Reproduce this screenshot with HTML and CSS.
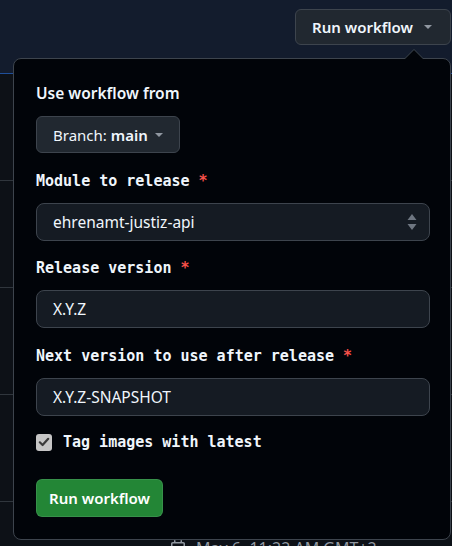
FILE: index.html
```html
<!DOCTYPE html>
<html lang="en">
<head>
<meta charset="utf-8">
<title>Run workflow</title>
<link rel="stylesheet" href="styles.css">
</head>
<body>
<div class="page">
  <header class="banner">
    <button class="btn btn-top" type="button">Run workflow <span class="caret"></span></button>
  </header>
  <ul class="runs">
    <li class="run"></li>
    <li class="run"></li>
    <li class="run"></li>
    <li class="run"></li>
    <li class="run run-last">
      <span class="meta">
        <svg class="cal" width="16" height="16" viewBox="0 0 16 16" aria-hidden="true"><path fill="currentColor" d="M4.75 0a.75.75 0 0 1 .75.75V2h5V.75a.75.75 0 0 1 1.5 0V2h1.25c.966 0 1.75.784 1.750 1.75v10.5A1.75 1.75 0 0 1 13.25 16H2.75A1.75 1.75 0 0 1 1 14.25V3.75C1 2.784 1.784 2 2.75 2H4V.75A.75.75 0 0 1 4.75 0ZM2.5 7.5v6.75c0 .138.112.25.25.25h10.5a.25.25 0 0 0 .25-.25V7.5Zm10.75-4H2.75a.25.25 0 0 0-.25.25V6h11V3.75a.25.25 0 0 0-.25-.25Z"/></svg>
        May 6, 11:22 AM GMT+2
      </span>
    </li>
  </ul>

  <div class="dropdown">
    <span class="arrow"></span>
    <form class="wf-form">
      <h4 class="wf-title">Use workflow from</h4>
      <button class="btn btn-branch" type="button">Branch: <strong>main</strong> <span class="caret"></span></button>

      <div class="group group-module">
        <label class="lbl">Module to release <span class="req">*</span></label>
        <div class="field field-select">
          <span>ehrenamt-justiz-api</span>
          <svg class="updown" width="10" height="18" viewBox="0 0 10 18" aria-hidden="true"><path fill="currentColor" d="M5 1 L9.5 7 H0.5 Z M5 17 L9.5 11 H0.5 Z"/></svg>
        </div>
      </div>

      <div class="group group-release">
        <label class="lbl">Release version <span class="req">*</span></label>
        <div class="field">X.Y.Z</div>
      </div>

      <div class="group group-next">
        <label class="lbl">Next version to use after release <span class="req">*</span></label>
        <div class="field">X.Y.Z-SNAPSHOT</div>
      </div>

      <label class="check-row">
        <span class="checkbox"><svg width="12" height="12" viewBox="0 0 12 12" aria-hidden="true"><path d="M1.8 6.3 L4.6 9 L10.2 2.8" fill="none" stroke="currentColor" stroke-width="2.2" stroke-linecap="round" stroke-linejoin="round"/></svg></span>
        <span class="lbl">Tag images with latest</span>
      </label>

      <button class="btn btn-primary" type="button">Run workflow</button>
    </form>
  </div>
</div>
</body>
</html>
```

FILE: styles.css
```css
html, body {
  margin: 0;
  padding: 0;
}
body {
  background: #0d1117;
  color: #f0f6fc;
  font-family: "Noto Sans", "Open Sans", sans-serif;
  overflow: hidden;
}
.page {
  position: relative;
  width: 452px;
  height: 546px;
  overflow: hidden;
}
.banner {
  box-sizing: border-box;
  height: 74px;
  background: #131c2d;
  border-bottom: 1px solid #1f4f9a;
  display: flex;
  justify-content: flex-end;
  align-items: flex-start;
  padding: 9px 1px 0 0;
}
.btn {
  display: inline-flex;
  align-items: center;
  box-sizing: border-box;
  border-radius: 6px;
  font-family: "Noto Sans", "Open Sans", sans-serif;
  font-size: 15px;
  color: #f0f6fc;
  cursor: pointer;
  padding: 0;
}
.btn-top {
  height: 36px;
  width: 156px;
  padding: 0 0 0 16px;
  background: #212830;
  border: 1px solid #3d444d;
  font-weight: 600;
  gap: 11px;
}
.caret {
  display: inline-block;
  width: 0;
  height: 0;
  border-left: 4.5px solid transparent;
  border-right: 4.5px solid transparent;
  border-top: 4.5px solid #9198a1;
}
.runs {
  list-style: none;
  margin: 0;
  padding: 0;
}
.run {
  height: 106px;
  border-bottom: 1px solid #30363d;
}
.run-last {
  height: 60px;
  border-bottom: none;
  display: flex;
  justify-content: flex-start;
  padding-left: 170px;
  padding-top: 32px;
  box-sizing: border-box;
}
.meta {
  display: inline-flex;
  align-items: center;
  gap: 10px;
  color: #9198a1;
  font-size: 16px;
}
.cal {
  color: #9198a1;
}

.dropdown {
  position: absolute;
  top: 58px;
  left: 13px;
  width: 438px;
  height: 482px;
  box-sizing: border-box;
  background: #010409;
  border: 1px solid #3d444d;
  border-radius: 8px;
  padding: 24px 20px 0 22px;
}
.arrow {
  position: absolute;
  top: -10px;
  left: 390px;
  width: 0;
  height: 0;
  border-left: 10px solid transparent;
  border-right: 10px solid transparent;
  border-bottom: 10px solid #3d444d;
}
.arrow::after {
  content: "";
  position: absolute;
  top: 1px;
  left: -9px;
  width: 0;
  height: 0;
  border-left: 9px solid transparent;
  border-right: 9px solid transparent;
  border-bottom: 9px solid #010409;
}
.wf-form {
  display: flex;
  flex-direction: column;
  align-items: flex-start;
}
.wf-title {
  margin: 0 0 13px;
  font-size: 15.5px;
  font-weight: 600;
  line-height: 20px;
  color: #f0f6fc;
}
.btn-branch {
  height: 37px;
  width: 144px;
  padding: 0 0 0 16px;
  background: #212830;
  border: 1px solid #3d444d;
  font-weight: 400;
  gap: 0;
}
.btn-branch strong {
  font-weight: 600;
  margin-left: 4px;
  margin-right: 7px;
}
.group {
  width: 100%;
  display: flex;
  flex-direction: column;
}
.group-module {
  margin-top: 18px;
}
.group-release {
  margin-top: 17px;
}
.group-next {
  margin-top: 18px;
}
.lbl {
  font-family: "DejaVu Sans Mono", "Liberation Mono", monospace;
  font-weight: 700;
  font-size: 15px;
  line-height: 20px;
  color: #f0f6fc;
}
.group .lbl {
  margin-bottom: 12px;
}
.req {
  color: #f85149;
}
.field {
  box-sizing: border-box;
  width: 100%;
  height: 38px;
  background: #151b23;
  border: 1px solid #3d444d;
  border-radius: 8px;
  padding: 0 16px;
  display: flex;
  align-items: center;
  font-size: 15.5px;
  color: #f0f6fc;
}
.field-select {
  justify-content: space-between;
  padding-right: 12px;
}
.updown {
  color: #6e7681;
}
.check-row {
  margin-top: 16px;
  display: flex;
  align-items: center;
  gap: 11px;
}
.checkbox {
  width: 16px;
  height: 17px;
  box-sizing: border-box;
  background: #c6c6c6;
  border-radius: 3px;
  display: flex;
  align-items: center;
  justify-content: center;
  color: #3b3b3b;
}
.btn-primary {
  margin-top: 27px;
  height: 38px;
  width: 127px;
  justify-content: center;
  background: #238636;
  border: 1px solid rgba(240, 246, 252, 0.1);
  color: #ffffff;
  font-weight: 600;
}
```
